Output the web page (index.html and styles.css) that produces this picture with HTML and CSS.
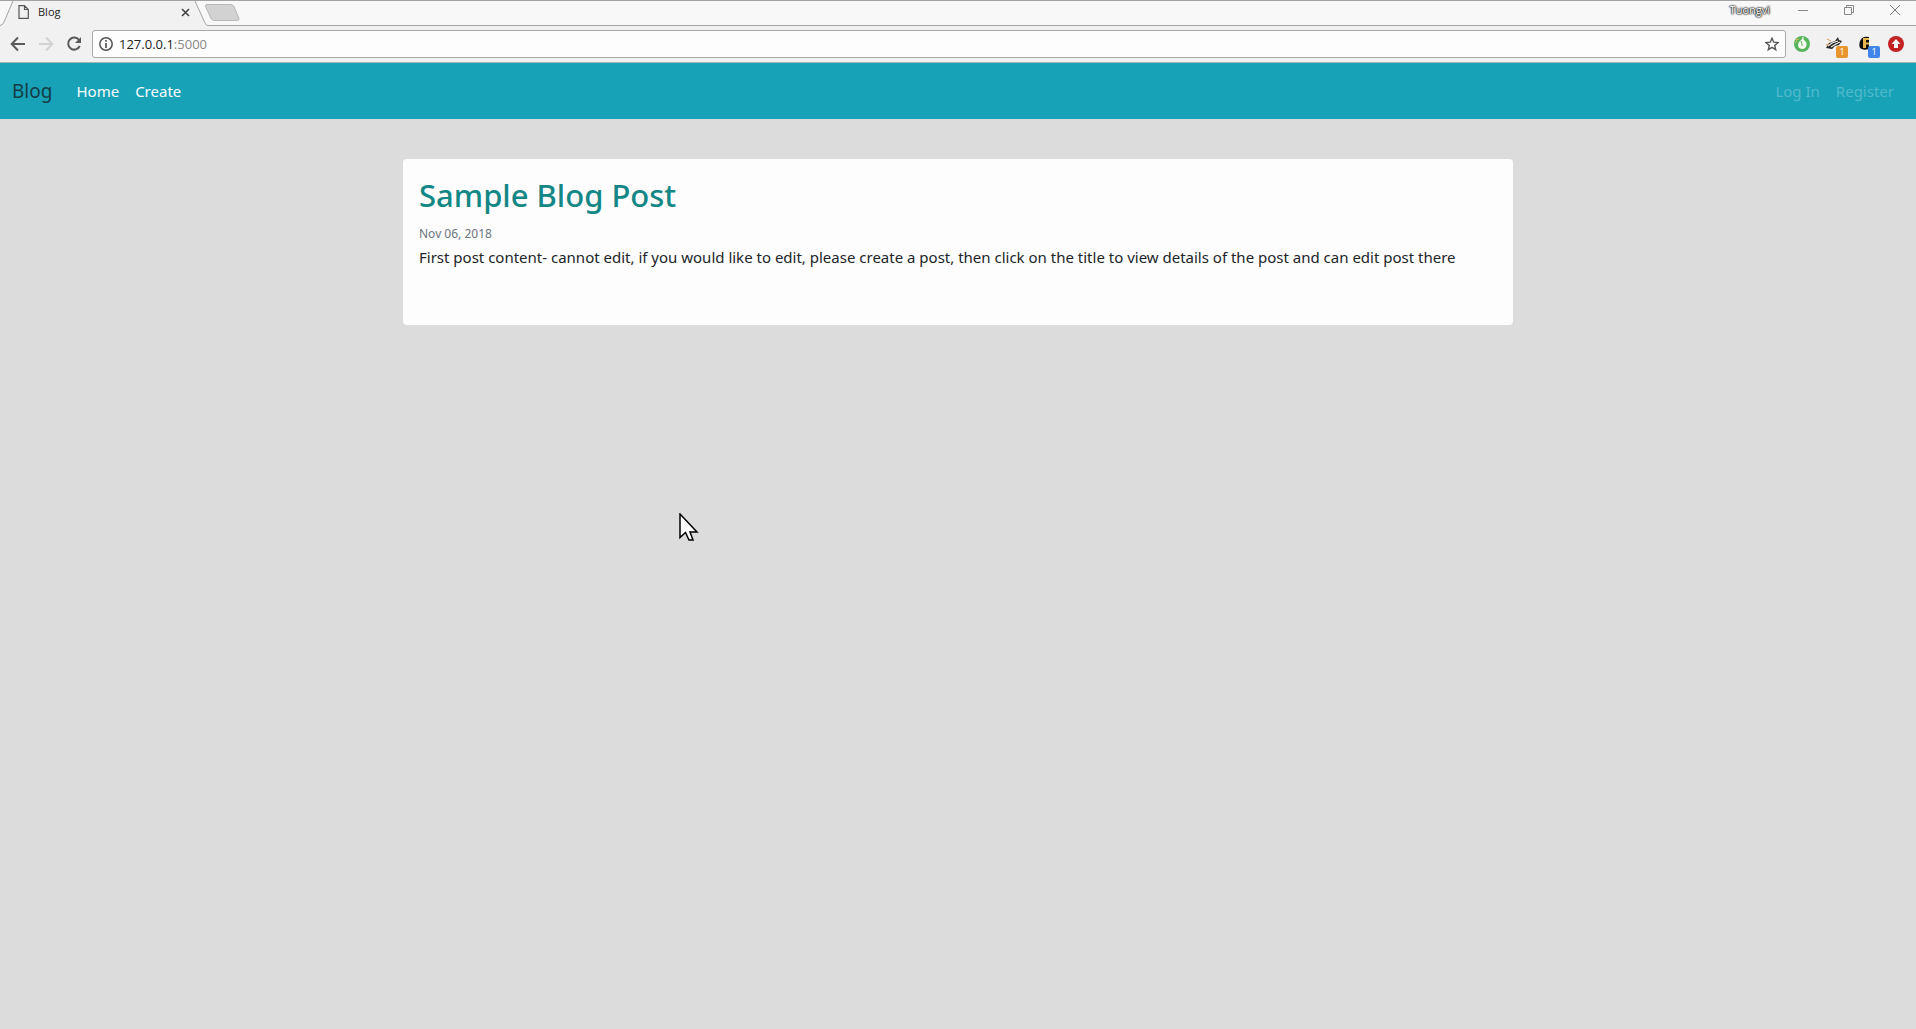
FILE: index.html
```html
<!DOCTYPE html>
<html lang="en">
<head>
<meta charset="utf-8">
<title>Blog</title>
<link rel="stylesheet" href="styles.css">
</head>
<body>
<div class="browser">
  <div class="tabstrip">
    <div class="tab">
      <svg class="tab-shape" width="240" height="26" viewBox="0 0 240 26" aria-hidden="true">
        <path d="M0 1H13L3 24L0 25Z" fill="#f8f8f8"/>
        <path d="M195 1H240V26H207L205 23Z" fill="#f8f8f8"/>
        <path d="M0 25.5Q3 25 4 22L13 1M195 1L205 23Q206 25.500 208 25.500H240" fill="none" stroke="#a3a3a3"/>
        <path d="M207 4.500H231Q233 4.500 234 6.500L239 18.500Q239.500 20.500 237 20.500H214Q212 20.500 211 18.500L205.500 6.500Q205 4.500 207 4.500Z" fill="#d2d2d2" stroke="#b9b9b9"/>
      </svg>
      <svg class="page-icon" width="12" height="14" viewBox="0 0 12 14" aria-hidden="true"><path d="M1 .7H6.500L10.300 4.500V13.300H1ZM6.500 .7V4.500H10.300" fill="none" stroke="#555" stroke-width="1.200"/></svg>
      <span class="tab-title">Blog</span>
      <button class="icon-button tab-close" aria-label="Close tab"><svg width="9" height="9" viewBox="0 0 9 9"><path d="M1 1L8 8M8 1L1 8" stroke="#444" stroke-width="1.600"/></svg></button>
    </div>
    <div class="window-controls">
      <span class="profile">Tuongvi</span>
      <button class="icon-button" aria-label="Minimize"><svg width="10" height="10" viewBox="0 0 10 10"><path d="M0 5.500H10" stroke="#888"/></svg></button>
      <button class="icon-button" aria-label="Restore"><svg width="10" height="10" viewBox="0 0 10 10"><path d="M.5 2.500H7.500V9.500H.5ZM2.500 2.500V.5H9.500V7.500H7.500" fill="none" stroke="#888"/></svg></button>
      <button class="icon-button" aria-label="Close"><svg width="10" height="10" viewBox="0 0 10 10"><path d="M0 0L10 10M10 0L0 10" stroke="#777"/></svg></button>
    </div>
  </div>
  <div class="toolbar">
    <div class="history">
      <button class="icon-button" aria-label="Back"><svg width="16" height="16" viewBox="0 0 16 16"><path d="M15 8H2M8 1.500L1.700 8L8 14.500" fill="none" stroke="#5a5a5a" stroke-width="2"/></svg></button>
      <button class="icon-button" aria-label="Forward"><svg width="16" height="16" viewBox="0 0 16 16"><path d="M1 8H14M8 1.500L14.300 8L8 14.500" fill="none" stroke="#d2d2d2" stroke-width="2"/></svg></button>
      <button class="icon-button" aria-label="Reload"><svg width="16" height="16" viewBox="0 0 16 16"><path d="M13 4A6 6 0 1 0 13.700 10" fill="none" stroke="#5a5a5a" stroke-width="2"/><path d="M15 1V7H9Z" fill="#5a5a5a"/></svg></button>
    </div>
    <div class="omnibox">
      <svg width="14" height="14" viewBox="0 0 14 14" aria-hidden="true"><circle cx="7" cy="7" r="6.200" fill="none" stroke="#555" stroke-width="1.500"/><path d="M7 3V4.700M7 6V11" stroke="#555" stroke-width="1.700"/></svg>
      <span class="address">127.0.0.1<span class="port">:5000</span></span>
      <button class="icon-button" aria-label="Bookmark this page"><svg width="14" height="14" viewBox="0 0 14 14"><path d="M7 1.200L8.700 5.200L13 5.600L9.700 8.400L10.700 12.700L7 10.400L3.300 12.700L4.300 8.400L1 5.600L5.300 5.200Z" fill="none" stroke="#555" stroke-width="1.400"/></svg></button>
    </div>
    <div class="extensions">
      <svg width="16" height="16" viewBox="0 0 16 16" aria-hidden="true"><circle cx="8" cy="8" r="8" fill="#55b65b"/><path d="M9.500 1Q9 3 10.500 4.500Q13 6 12.500 9.500Q11.500 13 8 13Q4 12.500 4 9Q4 6 6.500 4.500Q8.500 3 8.500 1Z" fill="#f4f8ee"/><path d="M7 5Q8 7 8.200 10M2 6L4 5M3 12L5 13" stroke="#55b65b" fill="none"/><path d="M1 7L3 5M2 4L5 3" stroke="#e0b44b"/></svg>
      <div class="extension">
        <svg width="16" height="16" viewBox="0 0 16 16" aria-hidden="true"><path d="M0 12L3 7L9 5L12 1L13 4L16 5L13 9L9 10L6 13Z" fill="#2c2824"/><path d="M2 10L6 7L12 5M5 11L10 8L14 6" stroke="#eee" stroke-width="1.200" fill="none"/><path d="M1 3L5 5M0 9L3 8" stroke="#db9852"/></svg>
        <span class="badge badge-orange">1</span>
      </div>
      <div class="extension">
        <svg width="16" height="16" viewBox="0 0 16 16" aria-hidden="true"><path d="M4 2Q7 0 11 1V13Q5 15 2 12Q0 7 4 2Z" fill="#111"/><path d="M5 2H11V4H8V6.500H11V8.500H8V12H5Z" fill="#e8b74b"/></svg>
        <span class="badge badge-blue">1</span>
      </div>
      <svg width="16" height="16" viewBox="0 0 16 16" aria-hidden="true"><circle cx="8" cy="8" r="8" fill="#c42222"/><path d="M8 3L12.500 8H10V12H6V8H3.500Z" fill="#fff"/></svg>
    </div>
  </div>
</div>
<nav class="navbar">
  <a class="brand" href="#">Blog</a>
  <a class="nav-link" href="#">Home</a>
  <a class="nav-link" href="#">Create</a>
  <div class="account">
    <a class="nav-link muted" href="#">Log In</a>
    <a class="nav-link muted" href="#">Register</a>
  </div>
</nav>
<main class="container">
  <article class="card">
    <h2 class="post-title"><a href="#">Sample Blog Post</a></h2>
    <time class="post-date" datetime="2018-11-06">Nov 06, 2018</time>
    <p class="post-body">First post content- cannot edit, if you would like to edit, please create a post, then click on the title to view details of the post and can edit post there</p>
  </article>
</main>
<svg class="pointer" width="20" height="30" viewBox="0 0 20 30" aria-hidden="true"><path d="M1 1V24.500L6.500 19.500L10 27H14L11 19H18Z" fill="#fff" stroke="#000" stroke-width="1.500"/></svg>
</body>
</html>
```
FILE: styles.css
```css
* { box-sizing: border-box; }

body {
  margin: 0;
  background: #dcdcdc;
  color: #212529;
  font: 15px/24px "Noto Sans", "Open Sans", sans-serif;
}

a { color: inherit; text-decoration: none; }

.icon-button {
  display: flex;
  padding: 0;
  border: 0;
  background: none;
}

.browser {
  background: #f1f1f1;
  border-bottom: 1px solid #a9b5b7;
  font-family: "Open Sans", sans-serif;
}

.tabstrip {
  display: flex;
  justify-content: space-between;
  height: 26px;
  background: linear-gradient(#a3a3a3 1px, #f8f8f8 1px 25px, #a3a3a3 25px);
}

.tab {
  position: relative;
  display: flex;
  align-items: center;
  width: 240px;
  padding: 0 50px 3px 18px;
  background: #f1f1f1;
  border-top: 1px solid #a3a3a3;
}

.tab-shape { position: absolute; left: 0; bottom: 0; }
.page-icon, .tab-title, .tab-close { position: relative; }
.tab-title { margin-left: 8px; font-size: 11px; line-height: 16px; color: #222; }
.tab-close { margin-left: auto; }

.window-controls {
  display: flex;
  align-items: center;
  gap: 36px;
  padding: 0 16px 6px 0;
}

.profile {
  margin-right: -8px;
  color: #fff;
  font-size: 11px;
  line-height: 16px;
  text-shadow: 0 0 1px #222, 0 0 1px #222, 0 0 2px #222, 0 0 2px #222;
}

.toolbar {
  display: flex;
  align-items: center;
  gap: 8px;
  padding: 4px 12px 4px 10px;
}

.history { display: flex; gap: 12px; padding-right: 2px; }

.omnibox {
  display: flex;
  flex: 1;
  align-items: center;
  height: 28px;
  padding: 0 6px;
  border: 1px solid #a9a9a9;
  border-radius: 3px;
  background: #fdfdfd;
}

.address { flex: 1; margin-left: 6px; font-size: 13px; line-height: 20px; color: #222; }
.port { color: #888; }

.extensions { display: flex; gap: 16px; }
.extension { position: relative; display: flex; }
.extension:nth-child(3) { margin-right: -2px; }

.badge {
  position: absolute;
  left: 10px;
  top: 10px;
  width: 12px;
  height: 12px;
  border-radius: 2px;
  color: #fff;
  font-size: 9px;
  line-height: 12px;
  text-align: center;
}

.badge-orange { background: #e8952e; }
.badge-blue { background: #4285e8; }

.navbar {
  display: flex;
  align-items: center;
  gap: 16px;
  height: 56px;
  padding: 0 22px 0 12px;
  background: #17a2b8;
  color: #fcfcfc;
}

.brand { margin-right: 8px; font-size: 19px; line-height: 30px; color: #153d46; }
.account { display: flex; gap: 16px; margin-left: auto; }
.muted { color: #52b9ca; }

.container { max-width: 1110px; margin: 40px auto; }

.card {
  padding: 16px 16px 56px;
  border-radius: 4px;
  background: #fdfdfd;
}

.post-title {
  margin: 0 0 8px;
  color: #138785;
  font-size: 31px;
  font-weight: 500;
  line-height: 40px;
}

.post-date { display: block; color: #6c757d; font-size: 12px; line-height: 22px; }
.post-body { margin: 0; }

.pointer { position: absolute; left: 679px; top: 513px; }
```
